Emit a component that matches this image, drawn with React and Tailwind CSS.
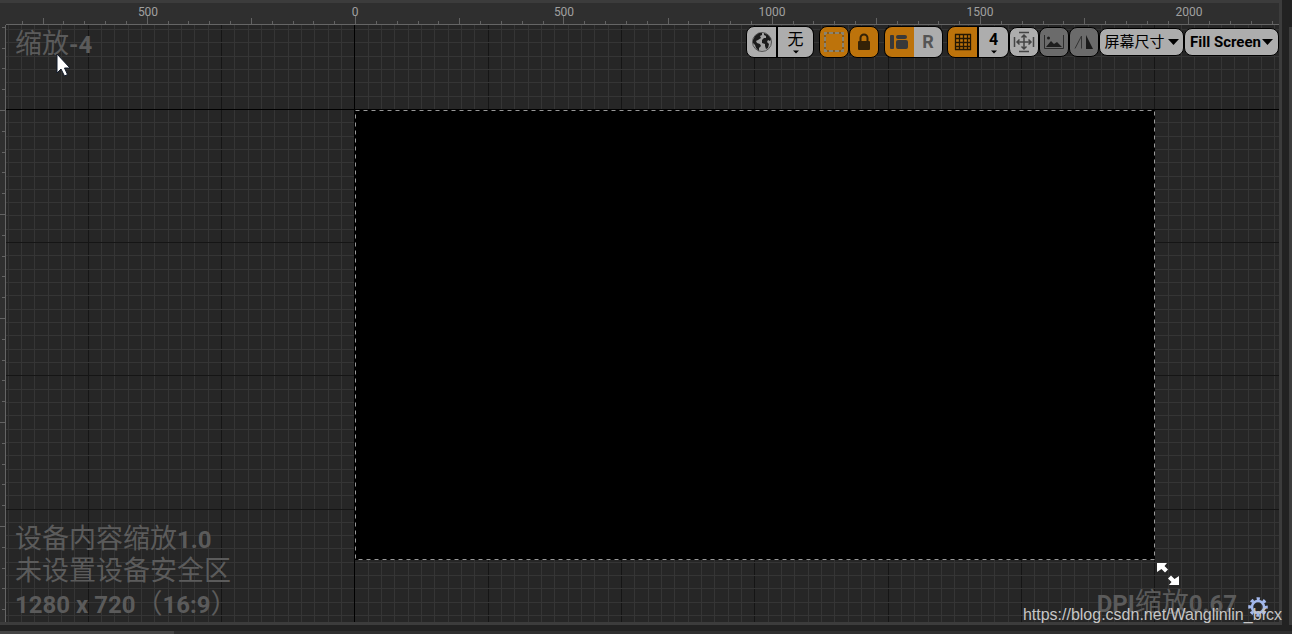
import React from "react";

const TICK = 500 / 24;
const range = (a, b) => Array.from({ length: b - a + 1 }, (_, i) => a + i);

function GridLines() {
  const colAt = (k) => Math.floor(348.7 + (k * 40) / 3) + 0.5;
  const rowAt = (k) => Math.floor(84.4 + k * 13.32) + 0.5;
  const tone = (k) => (k % 10 === 0 ? "#151515" : "#353535");
  const cols = range(-26, 160);
  const rows = range(-6, 90);
  const order = (list) => [...list.filter((k) => k % 10 !== 0), ...list.filter((k) => k % 10 === 0)];
  return (
    <svg className="absolute inset-0 h-full w-full" aria-hidden="true">
      {order(cols).map((k) => (
        <path key={"c" + k} d={`M${colAt(k)} 0V1400`} stroke={tone(k)} />
      ))}
      {order(rows).map((k) => (
        <path key={"r" + k} d={`M0 ${rowAt(k)}H2600`} stroke={tone(k)} />
      ))}
      <path d="M348.500 0V1400M0 84.500H2600" stroke="#000" />
    </svg>
  );
}

function TopRuler() {
  return (
    <svg className="block h-[22px] w-full" aria-label="Horizontal ruler">
      {range(-17, 110).map((k) => {
        const x = Math.round(355 + k * TICK) + 0.5;
        const h = k % 10 === 0 ? 8 : k % 5 === 0 ? 6 : 3;
        return x > 6 ? <path key={k} d={`M${x} 21V${21 - h}`} stroke="#626262" /> : null;
      })}
      {range(-1, 4).map((n) => (
        <text
          key={n}
          x={Math.round(355.4 + n * 10 * TICK) + (n < 0 ? 1 : 0)}
          y="13"
          textAnchor="middle"
          fontSize="12"
          fill="#a0a0a0"
        >
          {Math.abs(n * 500)}
        </text>
      ))}
      <path d="M6 21.500H2600" stroke="#656565" />
    </svg>
  );
}

function SideRuler() {
  return (
    <svg className="block h-full w-[6px] shrink-0 bg-[#2f2f2f]" aria-label="Vertical ruler">
      {range(-4, 60).map((k) => {
        const y = Math.round(85 + k * 20.8) + 0.5;
        const l = k % 5 === 0 ? 5 : 3;
        return <path key={k} d={`M5 ${y}H${5 - l}`} stroke="#626262" />;
      })}
      <path d="M5.500 0V1400" stroke="#656565" />
    </svg>
  );
}

const base = "flex items-center justify-center border border-black text-black ";
const gray = "bg-[#adadad] ";
const orange = "bg-[#bd730b] ";

function Btn({ label, className, children }) {
  return (
    <button type="button" aria-label={label} className={base + className}>
      {children}
    </button>
  );
}

const Caret = () => (
  <svg width="6" height="4" viewBox="0 0 6 4" aria-hidden="true">
    <path d="M0 0.500H6L3 3.500Z" fill="#000" />
  </svg>
);

const BigCaret = () => (
  <svg width="11" height="6" viewBox="0 0 11 6" aria-hidden="true">
    <path d="M0 0H11L5.500 6Z" fill="#000" />
  </svg>
);

function Toolbar() {
  return (
    <div className="absolute right-0 top-px flex items-center font-bold">
      <div className="mr-[5px] flex">
        <Btn label="Localization preview" className={gray + "h-8 w-[31px] rounded-l-lg"}>
          <svg width="22" height="22" viewBox="0 0 22 22" aria-hidden="true">
            <circle cx="11" cy="11" r="9.500" fill="#a3a3a3" stroke="#555" />
            <path d="M2 9 4 5l4-3 3 0 0 2-2 1 1 2-3 2-2 1 1 2 3 1 1 2-2 2 0 3-3-3-1-3-2-2zM13 2l4 2 3 4-1 2-2-1-1 2 2 2-1 4-2 1-1-3 0-2-3-1 0-3 2-2 2 0 0-2-2-1z" fill="#1c1c1c" />
          </svg>
        </Btn>
        <Btn label="无" className={gray + "-ml-px h-8 w-[38px] flex-col rounded-r-lg border-l-2 text-base font-normal leading-5"}>
          <span>无</span>
          <Caret />
        </Btn>
      </div>
      <Btn label="Show outlines" className={orange + "h-8 w-[30px] rounded-lg"}>
        <svg width="22" height="22" viewBox="0 0 22 22" aria-hidden="true">
          <rect x="2" y="2" width="18" height="18" fill="none" stroke="#8a5c1c" strokeWidth="2" />
          <rect x="2" y="2" width="18" height="18" fill="none" stroke="#8a8370" strokeWidth="2" strokeDasharray="4 2" strokeDashoffset="2" />
        </svg>
      </Btn>
      <Btn label="Respect locks" className={orange + "mr-[5px] h-8 w-[30px] rounded-lg"}>
        <svg width="14" height="18" viewBox="0 0 14 18" aria-hidden="true">
          <path d="M3.500 9V5a3.500 3.500 0 0 1 7 0v4" fill="none" stroke="#342207" strokeWidth="2" />
          <rect x="1" y="8" width="12" height="9" rx="1" fill="#342207" />
        </svg>
      </Btn>
      <div className="mr-1 flex">
        <Btn label="Layout transform" className={orange + "h-8 w-[30px] rounded-l-lg border-r-0"}>
          <svg width="20" height="18" viewBox="0 0 20 18" aria-hidden="true">
            <rect x="0" y="2" width="4" height="14" rx="1" fill="#393939" />
            <rect x="6" y="2" width="11" height="4" rx="2" fill="#393939" />
            <rect x="6" y="7" width="12" height="9" rx="2" fill="#393939" />
          </svg>
        </Btn>
        <Btn label="Render transform" className={gray + "h-8 w-[29px] rounded-r-lg border-l-0 text-lg"}>
          <span className="text-[#555]">R</span>
        </Btn>
      </div>
      <div className="flex">
        <Btn label="Grid snapping" className={orange + "h-8 w-[31px] rounded-l-lg"}>
          <svg width="18" height="18" viewBox="0 0 18 18" aria-hidden="true">
            <path d="M1.500 1V17M5.500 1V17M9.500 1V17M13.500 1V17M16.500 1V17M1 1.500H17M1 5.500H17M1 9.500H17M1 13.500H17M1 16.500H17" stroke="#241703" strokeWidth="1.300" />
          </svg>
        </Btn>
        <Btn label="Grid size 4" className={gray + "-ml-px h-8 w-[32px] flex-col rounded-r-lg border-l-2 text-base leading-5"}>
          <span>4</span>
          <Caret />
        </Btn>
      </div>
      <Btn label="Zoom to fit" className={gray + "h-[30px] w-[30px] rounded-lg"}>
        <svg width="22" height="22" viewBox="0 0 22 22" fill="none" stroke="#444" strokeWidth="1.500" aria-hidden="true">
          <path d="M6 1.500H16M6 20.500H16M1.500 6V16M20.500 6V16M11 4V18M4 11H18M8.500 6.500l2.500-2.500 2.500 2.500M8.500 15.500l2.500 2.500 2.500-2.500M6.500 8.500l-2.500 2.500 2.500 2.500M15.500 8.500l2.500 2.500-2.500 2.500" />
        </svg>
      </Btn>
      <Btn label="Image preview" className="h-[30px] w-[30px] rounded-lg bg-[#6b6b6b]">
        <svg width="22" height="16" viewBox="0 0 22 16" aria-hidden="true">
          <path d="M1.500 1V14.500H20.500V1" fill="none" stroke="#2c2c2c" />
          <path d="M3 13 8 7l3 3 3-2 5 5Z" fill="#1d1d1d" />
          <circle cx="5.500" cy="4" r="1.500" fill="#1d1d1d" />
        </svg>
      </Btn>
      <Btn label="Flip preview" className="h-[30px] w-[30px] rounded-lg bg-[#6b6b6b]">
        <svg width="20" height="16" viewBox="0 0 20 16" aria-hidden="true">
          <path d="M1 14.500 7.500 2V14.500" fill="none" stroke="#333" />
          <path d="M12 1V15H19Z" fill="#1a1a1a" />
        </svg>
      </Btn>
      <Btn label="屏幕尺寸" className={gray + "h-7 w-[85px] gap-[3px] rounded-lg text-[15px] font-normal"}>
        <span>屏幕尺寸</span>
        <BigCaret />
      </Btn>
      <Btn label="Fill Screen" className={gray + "h-7 w-[95px] gap-px whitespace-nowrap rounded-lg text-[15px]"}>
        <span>Fill Screen</span>
        <BigCaret />
      </Btn>
    </div>
  );
}

const Han = ({ children }) => <span className="text-[27px] font-normal leading-none">{children}</span>;
const Paren = ({ children }) => (
  <span lang="zh-Hant" className="font-['Noto_Sans_CJK_TC',sans-serif] text-[27px] font-normal leading-none">
    {children}
  </span>
);

export default function App() {
  return (
    <main className="relative flex min-h-screen flex-col overflow-hidden bg-[#222] font-['Roboto','Noto_Sans_CJK_SC',sans-serif]">
      <div className="flex flex-1">
        <section className="mr-[7px] flex min-w-0 flex-1 flex-col border-b-[3px] border-r-[3px] border-t-[3px] border-[#3c3c3c] bg-[#2f2f2f]">
          <TopRuler />
          <div className="relative flex-1 overflow-hidden">
            <div className="absolute inset-0 flex">
              <SideRuler />
              <div className="relative flex-1 overflow-hidden bg-[#262626]">
                <GridLines />
                <div className="absolute left-[349px] top-[85px] h-[450px] w-[800px] bg-black">
                  <svg className="h-full w-full" aria-hidden="true">
                    <rect x="0.500" y="0.500" width="799" height="449" fill="none" stroke="#999" strokeDasharray="4 4" />
                  </svg>
                </div>
                <svg className="absolute left-[1150px] top-[537px]" width="24" height="24" viewBox="0 0 24 24" aria-hidden="true">
                  <path d="M1 1h10L8.500 4l3.500 3.500-3 3L5.500 7 1 10zM23 23H13l2.500-3-3.500-3.500 3-3L18.500 17l4.500-3z" fill="#fff" />
                </svg>
                <p className="absolute left-[9px] top-1 h-8 text-[24px] font-bold leading-8 text-[#5b5b5b]">
                  <Han>缩放</Han>-4
                </p>
                <svg className="absolute left-[50px] top-[28px]" width="15" height="25" viewBox="0 0 15 25" aria-hidden="true">
                  <path d="M1 1V20l4-4 3.500 7 3-1.500L8.500 15H14Z" fill="#fff" stroke="#111a2a" />
                </svg>
                <div className="absolute bottom-0.5 left-[9px] text-[24px] font-bold leading-8 text-[#5b5b5b]">
                  <p className="h-8"><Han>设备内容缩放</Han>1.0</p>
                  <p className="h-8"><Han>未设置设备安全区</Han></p>
                  <p className="h-8">1280 x 720<Paren>（</Paren>16:9<Paren>）</Paren></p>
                </div>
                <p className="absolute bottom-0.5 right-[42px] h-8 text-[24px] font-bold leading-8 text-[#5b5b5b]">
                  DPI<Han>缩放</Han>0.67
                </p>
                <button type="button" aria-label="DPI settings" className="absolute bottom-[5px] right-[11px]">
                  <svg width="20" height="20" viewBox="0 0 20 20" fill="none" stroke="#a3b8ec" aria-hidden="true">
                    <circle cx="10" cy="10" r="8.300" strokeWidth="3" strokeDasharray="3.260 3.259" strokeDashoffset="1.630" />
                    <circle cx="10" cy="10" r="6" strokeWidth="2.500" />
                  </svg>
                </button>
                <Toolbar />
              </div>
            </div>
          </div>
        </section>
        <div className="mt-[27px] w-[3px] bg-[#3c3c3c]" />
      </div>
      <footer className="mt-[6px] flex h-[3px] bg-[#2f2f2f]">
        <div className="w-[174px] bg-[#444]" />
      </footer>
      <a
        href="https://blog.csdn.net/Wanglinlin_bfcx"
        className="absolute bottom-[9px] right-[10px] font-['Liberation_Sans',sans-serif] text-base leading-5 text-[#c6c6c6]"
      >
        https://blog.csdn.net/Wanglinlin_bfcx
      </a>
    </main>
  );
}
